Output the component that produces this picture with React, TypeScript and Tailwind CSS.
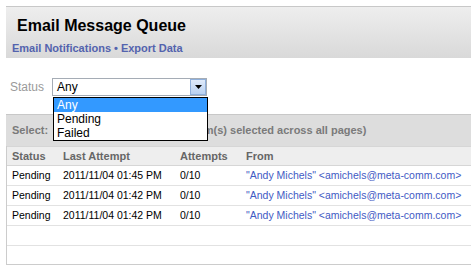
import React from "react";

const rows = [
  { status: "Pending", last: "2011/11/04 01:45 PM", attempts: "0/10" },
  { status: "Pending", last: "2011/11/04 01:42 PM", attempts: "0/10" },
  { status: "Pending", last: "2011/11/04 01:42 PM", attempts: "0/10" },
];

export default function App() {
  return (
    <div className="min-h-screen bg-white pt-[6px] pl-[6px] font-['Liberation_Sans',Arial,sans-serif] overflow-hidden">
      {/* Page header */}
      <div className="border-t border-[#c8c8c8] bg-gradient-to-b from-[#eeeeee] to-[#d9d9d9] h-[52px] pl-[11px]">
        <h1 className="pt-[10px] text-[16px] leading-[18px] font-bold text-black">Email Message Queue</h1>
        <div className="mt-[7px] -ml-[5px] text-[11px] leading-[13px] font-bold text-[#5363ae]">
          <span>Email Notifications</span>
          <span className="mx-[3px]">&bull;</span>
          <span>Export Data</span>
        </div>
      </div>

      {/* Filter */}
      <div className="mt-[20px] flex items-center pl-[4px]">
        <span className="w-[42px] text-[12px] text-[#9a9a9a]">Status</span>
        <div className="relative">
          <div className="flex h-[18px] w-[155px] items-center justify-between border border-[#a5acb5] bg-white pl-[4px] pr-0">
            <span className="text-[12px] leading-[14px] text-black">Any</span>
            <div className="flex h-[16px] w-[16px] items-center justify-center border border-[#8fb0dc] bg-gradient-to-b from-[#dfeafa] to-[#b9d1f1]">
              <svg width="7" height="4" viewBox="0 0 7 4">
                <path d="M0 0h7L3.5 4z" fill="#000" />
              </svg>
            </div>
          </div>
          <div className="absolute left-[1px] top-[19px] z-10 w-[155px] border border-black bg-white text-[12px] leading-[14px] text-black">
            <div className="bg-[#3399ff] pl-[3px] text-white">Any</div>
            <div className="pl-[3px]">Pending</div>
            <div className="pl-[3px]">Failed</div>
          </div>
        </div>
      </div>

      {/* Selection bar */}
      <div className="mt-[18px] flex h-[32px] items-center border-t border-[#c8c8c8] bg-[#dddddd] pl-[6px] text-[11px] font-bold text-[#7a7a7a]">
        <span>Select:</span>
        <span className="ml-[130px] whitespace-nowrap">(0 item(s) selected across all pages)</span>
      </div>

      {/* Table */}
      <div className="border-l border-b border-[#cccccc]">
        <div className="flex h-[20px] items-center border-y border-[#d6d6d6] bg-[#eeeeee] text-[11px] font-bold text-[#666666]">
          <span className="w-[56px] pl-[5px]">Status</span>
          <span className="w-[117px]">Last Attempt</span>
          <span className="w-[66px]">Attempts</span>
          <span>From</span>
        </div>
        {rows.map((r, i) => (
          <div key={i} className="flex h-[20px] items-center border-b border-[#e2e2e2] text-[10.5px] text-black">
            <span className="w-[56px] pl-[5px]">{r.status}</span>
            <span className="w-[117px]">{r.last}</span>
            <span className="w-[66px]">{r.attempts}</span>
            <span className="whitespace-nowrap text-[#3f5bc4]">"Andy Michels" &lt;amichels@meta-comm.com&gt;</span>
          </div>
        ))}
        <div className="h-[20px] border-b border-[#e2e2e2]" />
        <div className="h-[18px]" />
      </div>
    </div>
  );
}
